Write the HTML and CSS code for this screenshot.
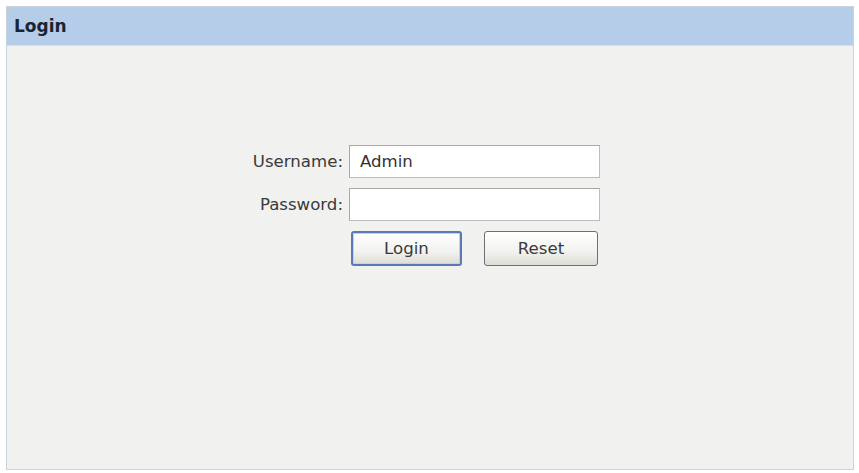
FILE: index.html
```html
<!DOCTYPE html>
<html>
<head>
<meta charset="utf-8">
<link rel="stylesheet" href="styles.css">
</head>
<body>
<div class="panel">
  <div class="panel-header">Login</div>
  <div class="panel-body">
    <form class="login-form">
      <div class="row">
        <label class="label">Username:</label>
        <input class="field" type="text" value="Admin">
      </div>
      <div class="row">
        <label class="label">Password:</label>
        <input class="field" type="password" value="">
      </div>
      <div class="actions">
        <button type="button" class="btn btn-primary">Login</button>
        <button type="button" class="btn btn-reset">Reset</button>
      </div>
    </form>
  </div>
</div>
</body>
</html>
```
FILE: styles.css
```css
html, body {
  margin: 0;
  padding: 0;
  background: #ffffff;
  width: 859px;
  height: 473px;
  overflow: hidden;
}
body {
  padding: 6px 5px 3px 6px;
  box-sizing: border-box;
  font-family: "DejaVu Sans", Verdana, sans-serif;
  color: #333;
}
.panel {
  height: 464px;
  border: 1px solid #c9d3de;
  box-sizing: border-box;
  display: flex;
  flex-direction: column;
  background: #f1f1f0;
}
.panel-header {
  height: 38px;
  background: #b5cde8;
  font-weight: bold;
  font-size: 17px;
  color: #1a2433;
  padding-left: 7px;
  display: flex;
  align-items: center;
  border-bottom: 1px solid #d4dee9;
}
.panel-body {
  flex: 1;
  padding-top: 99px;
  padding-left: 241px;
}
.login-form {
  display: flex;
  flex-direction: column;
  gap: 10px;
}
.row {
  display: flex;
  align-items: center;
}
.label {
  width: 101px;
  text-align: right;
  font-size: 16.6px;
  color: #3a3a3a;
  padding-right: 6px;
  box-sizing: border-box;
  white-space: nowrap;
}
.field {
  width: 251px;
  height: 33px;
  box-sizing: border-box;
  border: 1px solid #a9a9a9;
  border-right-color: #bdbdbd;
  border-bottom-color: #bdbdbd;
  background: #fff;
  font-family: "DejaVu Sans", Verdana, sans-serif;
  font-size: 16.6px;
  color: #333;
  padding: 0 10px;
  outline: none;
  margin: 0;
}
.actions {
  display: flex;
  gap: 22px;
  padding-left: 103px;
}
.btn {
  width: 111px;
  height: 35px;
  box-sizing: border-box;
  border: 1px solid #6f6f6f;
  border-radius: 3px;
  background: linear-gradient(#ffffff, #f2f2ef 60%, #dedcd5);
  font-family: "DejaVu Sans", Verdana, sans-serif;
  font-size: 16.6px;
  color: #3a3a3a;
  padding: 0;
  margin: 0;
}
.btn-reset {
  width: 114px;
}
.btn-primary {
  border: 2px solid #5b7ab5;
  box-shadow: inset 0 0 0 1px #c0d2ee;
}
```
